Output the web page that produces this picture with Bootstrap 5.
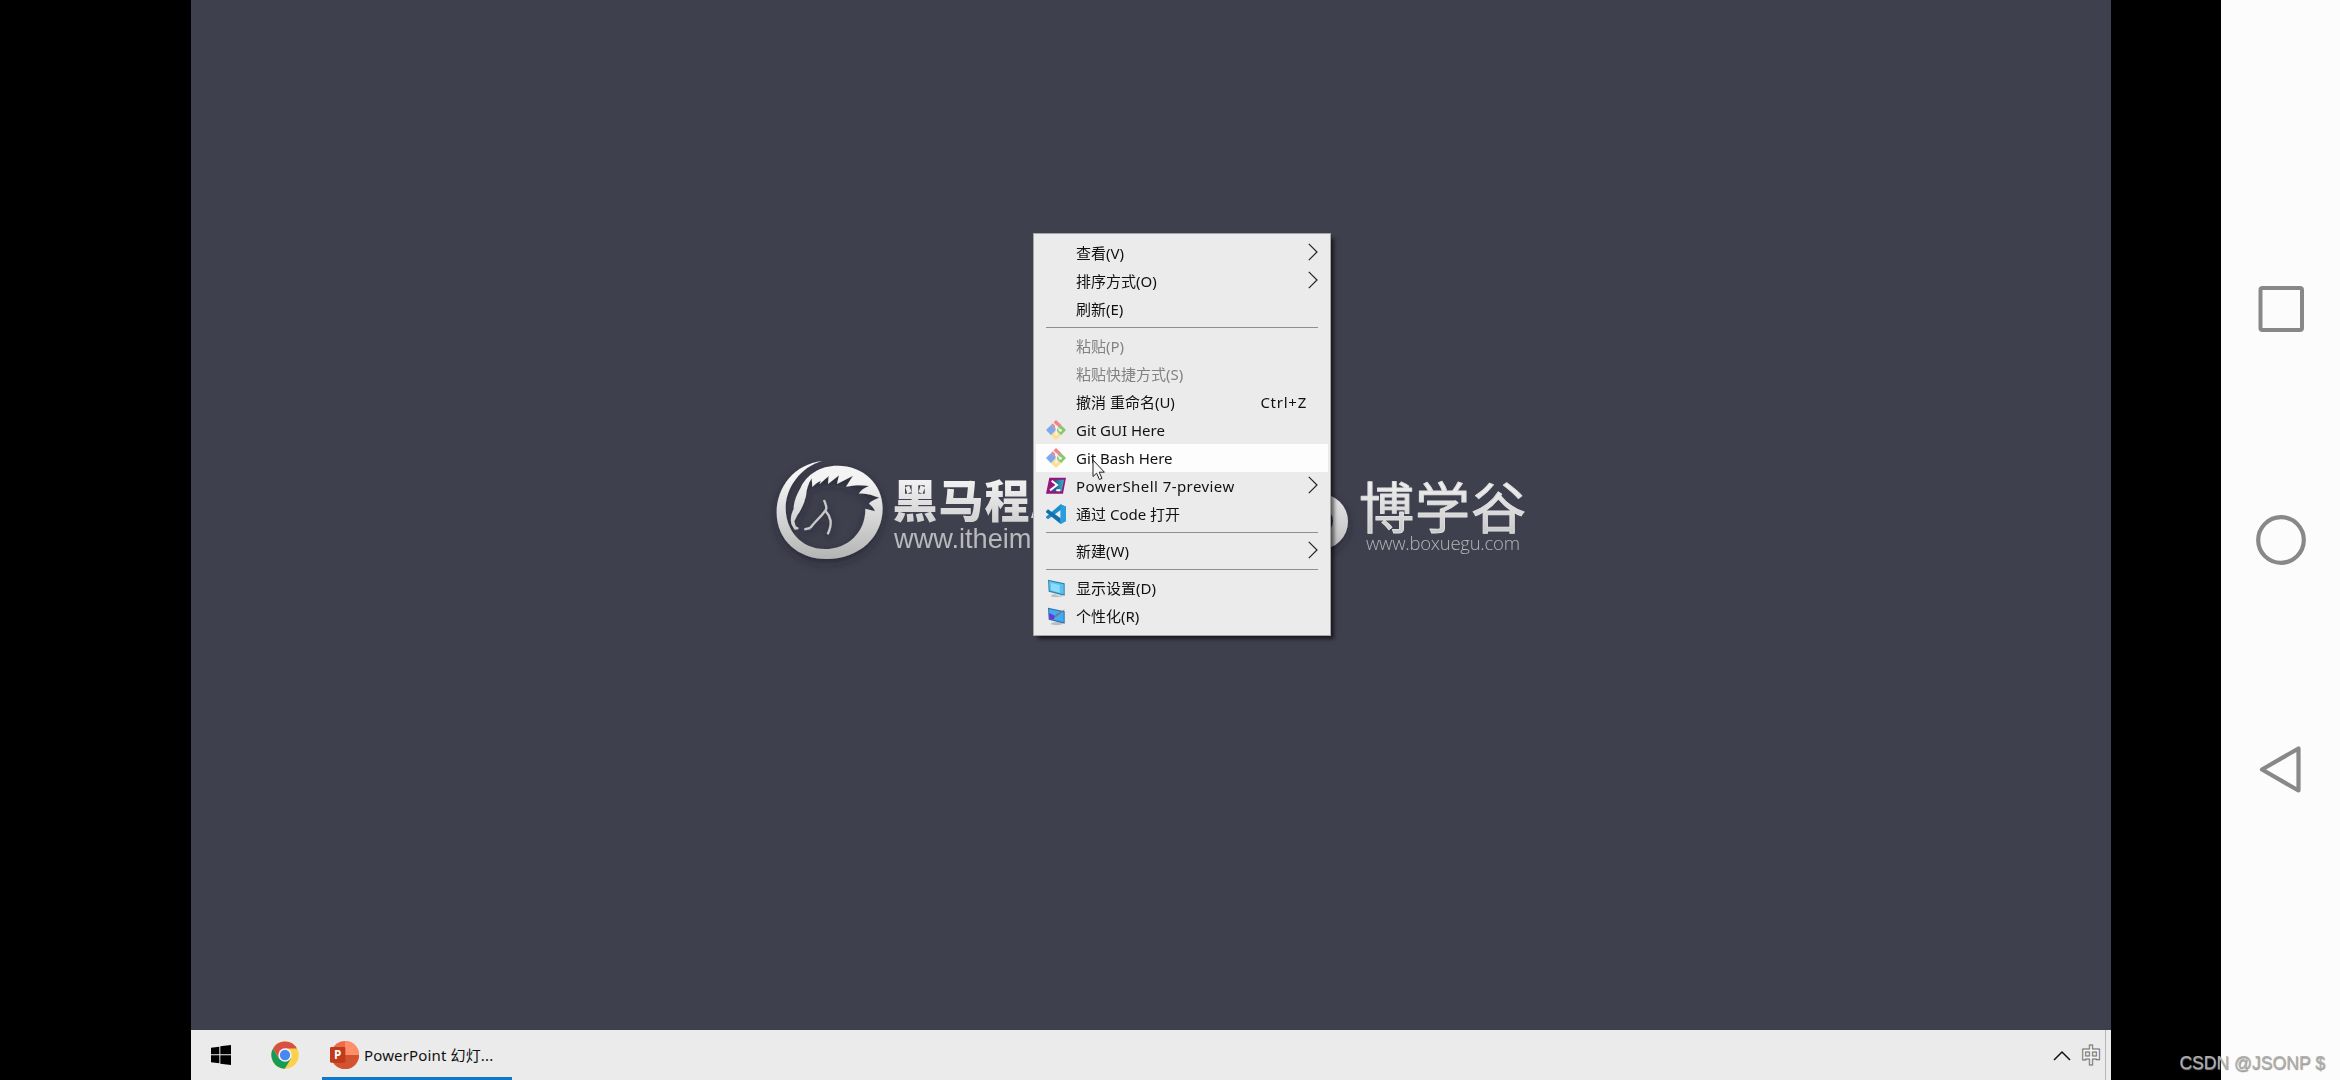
<!DOCTYPE html>
<html lang="zh-CN">
<head>
<meta charset="utf-8">
<title>Desktop</title>
<link rel="stylesheet" href="https://cdn.jsdelivr.net/npm/bootstrap@5.3.0/dist/css/bootstrap.min.css">
<script src="https://cdn.jsdelivr.net/npm/bootstrap@5.3.0/dist/js/bootstrap.bundle.min.js"></script>
<style>
body{width:2340px;height:1080px;background:#000;font-family:"Noto Sans","Noto Sans CJK SC",sans-serif;font-size:15px;line-height:28px;color:#111}
.pc{width:1920px;margin-left:191px}
.wall{background:#3f404d}
.wall-art{display:block;width:1920px;height:1030px}
.ctx{left:842px;top:233px;width:298px;height:403px;background:#ebebeb;border:1px solid #a5a5a5;padding:5px 2px;box-shadow:4px 4px 4px -1px rgba(0,0,0,.62)}
.ctx-row{height:28px;padding:0 10px 0 10px;white-space:nowrap}
.ctx-row.hot{background:#fdfdfd}
.ctx-ico{width:20px;height:20px;margin-right:10px;flex:none}
.ctx-row.off{color:#828282}
.ctx-key{margin-right:11px;letter-spacing:.75px}
.ctx-line{height:1px;margin:4px 10px;background:#8f8f8f}
.wide{letter-spacing:.43px}
.arr{width:10px;height:18px;margin-top:-2px}
.cursor{left:901px;top:459px;width:14px;height:22px}
.bar{height:50px;background:#ebebeb}
.task{width:190px;height:50px;margin-left:23px;padding-left:8px;border-bottom:3px solid #1278c6;border-top:3px solid transparent}
.task-label{padding-left:5px;letter-spacing:.15px}
.phone{width:119px;background:#fcfcfc}
.phone svg{width:54px;height:54px}
.wm{right:15px;bottom:6px;font:17.6px/22px "Liberation Sans",sans-serif;color:#b0b0b0;text-shadow:.5px .5px 1px #8a8a8a}
.ime{font-family:"Noto Sans CJK SC",sans-serif;font-weight:900;font-size:20px;line-height:24px;color:#f4f4f4;-webkit-text-stroke:1px #6f6f6f}
.peek{width:6px;border-left:1px solid #b5b5b5}
</style>
</head>
<body class="d-flex justify-content-between overflow-hidden position-relative">
<svg width="0" height="0" class="position-absolute">
 <defs>
  <symbol id="git" viewBox="0 0 60 60">
   <path d="M30 0L46 15 30 31 15 15z" fill="#ef8589"/><path d="M15 15L31 30 15 46 0 30z" fill="#7fa9ef"/>
   <path d="M45 15L60 30 45 46 29 30z" fill="#86c86b"/><path d="M30 30L45 46 30 60 15 46z" fill="#fbe08b"/>
   <path d="M20 7L31 19V43M32 20L43 31" stroke="#f3f2f2" stroke-width="4" fill="none"/>
   <circle cx="31" cy="20" r="4.500" fill="#f3f2f2"/><circle cx="31" cy="42" r="4.500" fill="#f3f2f2"/><circle cx="43" cy="31" r="4.500" fill="#f3f2f2"/>
  </symbol>
  <symbol id="arr" viewBox="0 0 10 18"><path d="M.8.8L9 9 .8 17.2" fill="none" stroke="#222" stroke-width="1.2"/></symbol>
 </defs>
</svg>

<main class="pc d-flex flex-column">
 <section class="wall flex-grow-1 position-relative">
  <svg class="wall-art" viewBox="191 0 1920 1030">
   <defs>
    <linearGradient id="silver" gradientUnits="userSpaceOnUse" x1="0" y1="462" x2="0" y2="560"><stop offset=".15" stop-color="#f4f4f5"/><stop offset="1" stop-color="#b5b5b7"/></linearGradient>
    <linearGradient id="silverLogo" gradientUnits="userSpaceOnUse" x1="0" y1="60" x2="0" y2="360"><stop offset=".2" stop-color="#f4f4f4"/><stop offset="1" stop-color="#b3b3b3"/></linearGradient>
    <filter id="soft" x="-20%" y="-20%" width="140%" height="150%"><feDropShadow dx="0" dy="4" stdDeviation="4" flood-color="#22232e" flood-opacity=".6"/></filter>
   </defs>
   <g filter="url(#soft)">
    <g transform="translate(760 440) scale(.33333)">
     <path fill="url(#silverLogo)" d="M187 63C104 72 50 140 50 218C50 300 115 357 200 357C300 357 368 290 368 205C368 132 310 77 232 77C180 77 140 104 122 143C109 165 101 187 101 207C94 221 90 238 95 254L104 269 115 268 116 263 107 259 103 244 112 226C120 215 126 203 132 188L138 168C139 150 145 130 155 115L157 141C164 134 172 126 183 122L178 133 206 108 204 132 237 106 231 132 279 107 258 140C276 136 304 133 327 138C310 145 302 152 297 161C318 158 337 166 358 173C341 179 332 184 327 191C336 198 342 205 345 214L316 206C317 278 262 327 195 327C122 327 77 270 77 204C77 142 123 80 187 63Z"/>
     <path d="M192 180C195 190 200 196 199 206C190 224 171 238 151 263M133 268L151 264M197 213C212 230 219 249 203 283" fill="none" stroke="#c9c9ca" stroke-width="7"/>
    </g>
    <path fill="url(#silver)" fill-rule="evenodd" d="M1320 493.500a28 28 0 0 1 0 56a28 28 0 0 1 0-56zM1325 510a8 11 0 0 1 0 22a8 11 0 0 1 0-22z"/>
   </g>
   <g fill="url(#silver)">
    <text x="892.500" y="518" font-size="45" font-weight="900" font-family="Noto Sans CJK SC, sans-serif" textLength="137">黑马程</text>
    <path d="M1031 518L1034 508V518z"/>
    <text x="894" y="547.500" font-size="27.200" font-family="Liberation Sans, sans-serif" fill="#b9b9bd">www.itheim</text>
    <text x="1359" y="528" font-size="55" font-weight="400" font-family="Noto Sans CJK SC, sans-serif" textLength="167" stroke="#dededf" stroke-width="1" stroke-linejoin="round">博学谷</text>
    <text x="1366" y="549.500" font-size="18.500" font-weight="300" font-family="Open Sans, sans-serif" textLength="154" fill="#b4b4b9">www.boxuegu.com</text>
   </g>
  </svg>

  <nav class="ctx position-absolute">
   <div class="ctx-row d-flex align-items-center"><span class="ctx-ico"></span><span>查看(V)</span><svg class="arr ms-auto"><use href="#arr"/></svg></div>
   <div class="ctx-row d-flex align-items-center"><span class="ctx-ico"></span><span>排序方式(O)</span><svg class="arr ms-auto"><use href="#arr"/></svg></div>
   <div class="ctx-row d-flex align-items-center"><span class="ctx-ico"></span><span>刷新(E)</span></div>
   <div class="ctx-line"></div>
   <div class="ctx-row off d-flex align-items-center"><span class="ctx-ico"></span><span>粘贴(P)</span></div>
   <div class="ctx-row off d-flex align-items-center"><span class="ctx-ico"></span><span>粘贴快捷方式(S)</span></div>
   <div class="ctx-row d-flex align-items-center"><span class="ctx-ico"></span><span>撤消 重命名(U)</span><span class="ctx-key ms-auto">Ctrl+Z</span></div>
   <div class="ctx-row d-flex align-items-center"><svg class="ctx-ico"><use href="#git"/></svg><span>Git GUI Here</span></div>
   <div class="ctx-row hot d-flex align-items-center"><svg class="ctx-ico"><use href="#git"/></svg><span>Git Bash Here</span></div>
   <div class="ctx-row d-flex align-items-center"><svg class="ctx-ico" viewBox="0 0 60 60"><defs><linearGradient id="psg"><stop offset=".3" stop-color="#215f8d"/><stop offset="1" stop-color="#35b7c4"/></linearGradient></defs><path d="M10 5H60L51 53H0z" fill="#97157f"/><path d="M24 11H54L47 46H16L33 28z" fill="url(#psg)"/><path d="M17 14L33 27 12 43M31 43H43" fill="none" stroke="#fff" stroke-width="6"/></svg><span class="wide">PowerShell 7-preview</span><svg class="arr ms-auto"><use href="#arr"/></svg></div>
   <div class="ctx-row d-flex align-items-center"><svg class="ctx-ico" viewBox="0 0 60 60"><path d="M44 1L60 8V51L44 60V18L6 46 0 41V38L44 1z" fill="#1b8ccd"/><path d="M0 22L6 16 44 43V60L0 25z" fill="#1270ae"/><path d="M44 1L60 8V51L44 60z" fill="#2a9ddd"/></svg><span>通过 Code 打开</span></div>
   <div class="ctx-line"></div>
   <div class="ctx-row d-flex align-items-center"><span class="ctx-ico"></span><span>新建(W)</span><svg class="arr ms-auto"><use href="#arr"/></svg></div>
   <div class="ctx-line"></div>
   <div class="ctx-row d-flex align-items-center"><svg class="ctx-ico" viewBox="0 -3 60 60"><ellipse cx="32" cy="50" rx="17" ry="5" fill="#b9bec3"/><path d="M28 40L44 45V53L28 49z" fill="#d4d7da"/><path d="M6 2L56 13V50L8 38z" fill="#347fab"/><path d="M9 6L53 16V46L11 35z" fill="#56c3f2"/><path d="M14 12L41 18V41L15 34z" fill="#8bdcfb"/></svg><span>显示设置(D)</span></div>
   <div class="ctx-row d-flex align-items-center"><svg class="ctx-ico" viewBox="0 -3 60 60"><ellipse cx="32" cy="50" rx="17" ry="5" fill="#b9bec3"/><path d="M6 2L56 13V50L8 38z" fill="#2f6fa8"/><path d="M9 6L53 16V46L11 35z" fill="#43a9f0"/><path d="M9 18L28 27 22 38 11 35z" fill="#6a35d6"/><path d="M58 6L35 27 25 31 30 22z" fill="#6d7f8f"/></svg><span>个性化(R)</span></div>
  </nav>
  <svg class="cursor position-absolute" viewBox="0 0 14 22"><path d="M1 1V17.500L4.600 14.200 7.400 20.500 10 19.400 7.200 13.200H12.400z" fill="#f8f8f8" stroke="#222" stroke-width="1"/></svg>
 </section>

 <footer class="bar d-flex align-items-center">
  <svg width="20" height="20" viewBox="0 0 60 60" style="margin-left:20px"><path d="M0 8L25 5V28H0zM28 4L60 0V28H28zM0 31H25V55L0 52zM28 31H60V60L28 56z" fill="#000"/></svg>
  <svg width="28" height="28" viewBox="0 0 48 48" style="margin-left:40px"><circle cx="24" cy="24" r="23.500" fill="#fbd04a"/><path d="M24 24L13.600 30 3.650 12.250A23.500 23.500 0 0 0 23.500 47.500L34.400 30z" fill="#169c56"/><path d="M24 24V13H44.500A23.500 23.500 0 0 0 3.650 12.250L13.800 30z" fill="#d94f43"/><circle cx="24" cy="24" r="11.500" fill="#f4f4f4"/><circle cx="24" cy="24" r="8.800" fill="#4688f1"/></svg>
  <div class="task d-flex align-items-center">
   <svg width="29" height="28" viewBox="0 0 87 84"><circle cx="45" cy="42" r="42" fill="#ed6c47"/><path d="M45 0A42 42 0 0 1 87 42H45z" fill="#ff8f6b"/><path d="M87 42A42 42 0 0 1 5 55L45 42z" fill="#d35230"/><rect y="18" width="46" height="47" rx="4" fill="#c13b1b"/><text x="12" y="54" font-family="Open Sans, sans-serif" font-weight="700" font-size="35" fill="#fff">P</text></svg>
   <span class="text-nowrap task-label">PowerPoint 幻灯...</span>
  </div>
  <svg class="ms-auto" width="18" height="11" viewBox="0 0 18 11"><path d="M1 10L9 2 17 10" fill="none" stroke="#111" stroke-width="1.500"/></svg>
  <span class="ime ps-1" style="margin-left:6px">中</span>
  <span class="peek align-self-stretch ms-1"></span>
 </footer>
</main>

<aside class="phone d-flex flex-column align-items-center">
 <svg style="margin-top:282px" viewBox="0 0 54 54"><rect x="6.500" y="6" width="41.500" height="42" rx="2" fill="none" stroke="#888" stroke-width="4"/></svg>
 <svg style="margin-top:177px" viewBox="0 0 54 54"><circle cx="27" cy="27" r="22.800" fill="none" stroke="#888" stroke-width="4.200"/></svg>
 <svg style="margin-top:175px" viewBox="0 0 54 54"><path d="M8 27.500L44.500 6.500V48.500z" fill="none" stroke="#888" stroke-width="4.200" stroke-linejoin="round"/></svg>
</aside>
<div class="wm position-absolute">CSDN @JSONP $</div>
</body>
</html>
